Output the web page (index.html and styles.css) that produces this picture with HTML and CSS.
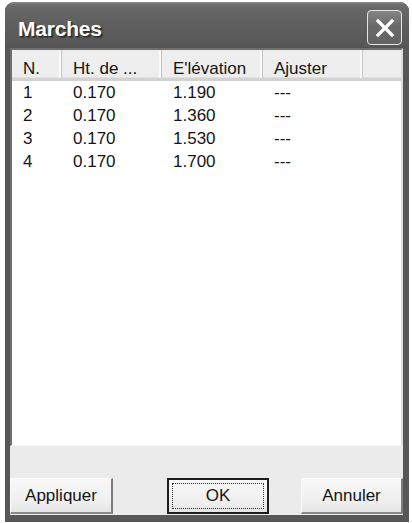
FILE: index.html
```html
<!DOCTYPE html>
<html>
<head>
<meta charset="utf-8">
<link rel="stylesheet" href="styles.css">
</head>
<body>
<div class="window">
  <div class="titlebar">
    <div class="title">Marches</div>
    <div class="close">
      <svg width="20" height="20" viewBox="0 0 20 20"><path d="M3 3 L17 17 M17 3 L3 17" stroke="#fff" stroke-width="3.2" stroke-linecap="square"/></svg>
    </div>
  </div>
  <div class="client">
    <div class="list">
      <div class="header">
        <div class="hcell">N.</div>
        <div class="hcell">Ht. de ...</div>
        <div class="hcell">E'lévation</div>
        <div class="hcell">Ajuster</div>
        <div class="hcell filler"></div>
      </div>
      <div class="rows">
        <div class="row"><div class="cell">1</div><div class="cell">0.170</div><div class="cell">1.190</div><div class="cell">---</div><div class="cell"></div></div>
        <div class="row"><div class="cell">2</div><div class="cell">0.170</div><div class="cell">1.360</div><div class="cell">---</div><div class="cell"></div></div>
        <div class="row"><div class="cell">3</div><div class="cell">0.170</div><div class="cell">1.530</div><div class="cell">---</div><div class="cell"></div></div>
        <div class="row"><div class="cell">4</div><div class="cell">0.170</div><div class="cell">1.700</div><div class="cell">---</div><div class="cell"></div></div>
      </div>
    </div>
    <div class="buttons">
      <div class="btn">Appliquer</div>
      <div class="btn default"><span class="focus">OK</span></div>
      <div class="btn cancel">Annuler</div>
    </div>
  </div>
</div>
</body>
</html>
```

FILE: styles.css
```css
html, body {
  margin: 0;
  padding: 0;
  background: #ffffff;
}
body {
  width: 412px;
  height: 523px;
  overflow: hidden;
  font-family: "Liberation Sans", Arial, sans-serif;
  font-size: 17px;
  color: #151515;
}
.window {
  margin: 2px 0 0 5px;
  width: 404px;
  height: 520px;
  background: #575757;
  border-radius: 9px 9px 0 0;
  display: flex;
  flex-direction: column;
  box-sizing: border-box;
}
.titlebar {
  height: 46px;
  flex: none;
  display: flex;
  align-items: flex-start;
  justify-content: space-between;
  border-radius: 9px 9px 0 0;
  background: linear-gradient(#8a8a8a 0px, #6c6c6c 3px, #666666 8px, #5e5e5e 24px, #585858 40px, #555555 46px);
}
.title {
  margin: 12px 0 0 13px;
  line-height: 30px;
  font-size: 21px;
  font-weight: bold;
  color: #ffffff;
  text-shadow: 1px 1px 0 #2a2a2a, 2px 2px 1px #3a3a3a;
  letter-spacing: -0.2px;
}
.close {
  margin: 8px 7px 0 0;
  width: 35px;
  height: 35px;
  box-sizing: border-box;
  border: 1px solid #e4e4e4;
  border-radius: 4px;
  background: linear-gradient(#858585, #6a6a6a 45%, #626262);
  display: flex;
  align-items: center;
  justify-content: center;
}
.client {
  margin: 0 6px 0 5px;
  height: 467px;
  background: #ebebeb;
  display: flex;
  flex-direction: column;
}
.list {
  height: 398px;
  flex: none;
  box-sizing: border-box;
  background: #ffffff;
  border-top: 2px solid #6e6e6e;
  border-left: 2px solid #6e6e6e;
  border-right: 2px solid #dcdcdc;
  border-bottom: 1px solid #f6f6f6;
  display: flex;
  flex-direction: column;
}
.header, .row {
  display: grid;
  grid-template-columns: 50px 100px 101px 100px 38px;
}
.header {
  height: 31px;
  box-sizing: border-box;
  background: #eeeeee;
  border-bottom: 3px solid #d2d2d2;
  box-shadow: inset 0 -1px 0 #e0e0e0;
}
.hcell {
  padding: 9px 0 0 11px;
  line-height: 20px;
  height: 28px;
  box-sizing: border-box;
  border-right: 1px solid #c4c4c4;
  box-shadow: inset -2px 0 0 #fafafa;
  white-space: nowrap;
  overflow: hidden;
}
.hcell.filler {
  border-right: none;
  box-shadow: none;
}
.row {
  height: 23px;
  line-height: 23px;
}
.cell {
  padding-left: 11px;
  white-space: nowrap;
}
.buttons {
  margin-top: 32px;
  height: 36px;
  display: flex;
}
.btn {
  width: 103px;
  height: 36px;
  box-sizing: border-box;
  background: linear-gradient(#f8f8f8, #efefef 70%, #e4e4e4);
  border-top: 1px solid #fcfcfc;
  border-left: 1px solid #fcfcfc;
  border-right: 2px solid #7c7c7c;
  border-bottom: 2px solid #8a8a8a;
  display: flex;
  align-items: center;
  justify-content: center;
  line-height: 20px;
}
.btn.default {
  width: 102px;
  margin-left: 54px;
  border: 2px solid #1c1c1c;
  padding: 3px;
}
.focus {
  flex: 1;
  align-self: stretch;
  border: 1px dotted #333;
  display: flex;
  align-items: center;
  justify-content: center;
}
.btn.cancel {
  width: 102px;
  margin-left: auto;
}
```
